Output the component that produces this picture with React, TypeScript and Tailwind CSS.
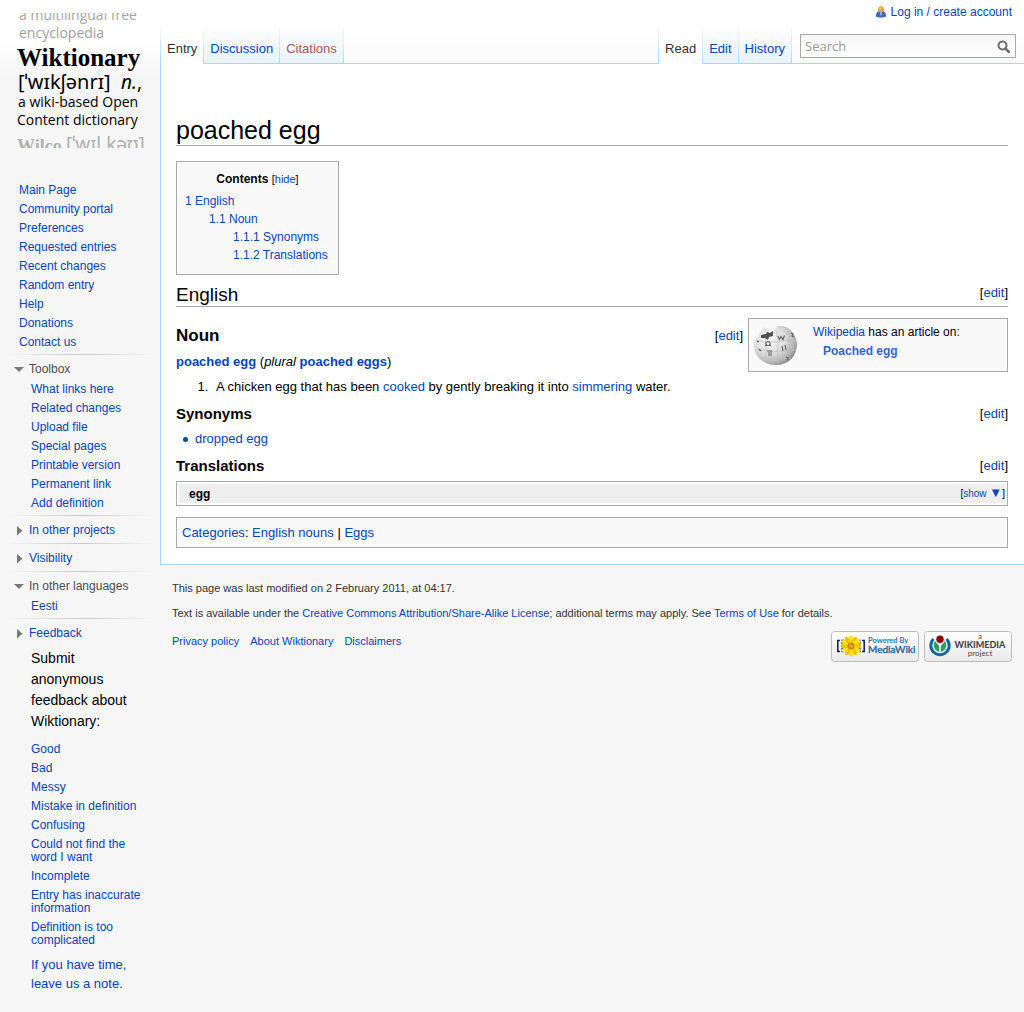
import type { ReactNode } from 'react';

function Link({ children, className = 'text-[#0645b5]' }: { children: ReactNode; className?: string }) {
  return (
    <a href="#" className={`hover:underline ${className}`}>
      {children}
    </a>
  );
}

function Logo() {
  return (
    <a href="#" aria-label="Wiktionary main page" className="mt-3 block h-[136px] w-full overflow-hidden">
      <svg viewBox="0 12 160 136" className="block h-[136px] w-[160px]">
        <defs>
          <clipPath id="logoClip">
            <rect x="0" y="13" width="160" height="135" />
          </clipPath>
        </defs>
        <g clipPath="url(#logoClip)" fontFamily="'Open Sans', 'Noto Sans', sans-serif" fontWeight="500">
          <text x="19" y="20" fontSize="14" fill="#a6a6a6">a multilingual free</text>
          <text x="19" y="38" fontSize="14" fill="#a0a0a0">encyclopedia</text>
          <text x="17" y="66" fontSize="25" fontWeight="700" fontFamily="'Liberation Serif', serif" fill="#000">Wiktionary</text>
          <text x="18" y="89" fontSize="20" fontWeight="400" fontFamily="'Noto Sans', sans-serif" fill="#000">[ˈwɪkʃənrɪ]</text>
          <text x="121" y="89" fontSize="19" fontWeight="400" fontFamily="'Noto Sans', sans-serif" fill="#000">
            <tspan fontStyle="italic">n.</tspan>,
          </text>
          <text x="18" y="107" fontSize="14" fill="#000">a wiki-based Open</text>
          <text x="17" y="125" fontSize="14" fill="#000">Content dictionary</text>
          <text x="17" y="152" fontSize="18" fontWeight="700" fontFamily="'Liberation Serif', serif" fill="#b0b0b0">Wilco</text>
          <text x="66" y="151" fontSize="19" fontWeight="400" fontFamily="'Noto Sans', sans-serif" fill="#b0b0b0">[ˈwɪl kəʊ]</text>
        </g>
      </svg>
    </a>
  );
}

function Divider() {
  return <div className="ml-2 mr-[6px] h-px bg-linear-to-r from-transparent via-[#c8c8c8] to-transparent" />;
}

function PortalTitle({ label, open = false }: { label: string; open?: boolean }) {
  return (
    <button
      type="button"
      aria-expanded={open}
      className={`flex h-[27px] w-full items-center pt-[2px] pl-[13px] text-left text-[12px] leading-[19px] ${open ? 'text-[#4d4d4d]' : 'text-[#0645b5]'}`}
    >
      <svg viewBox="0 0 12 12" className="mr-1 h-3 w-3 shrink-0" fill="#797979" aria-hidden="true">
        {open ? <path d="M1 3h10L6 8z" /> : <path d="M4 1v9.500l5.500-4.750z" />}
      </svg>
      {label}
    </button>
  );
}

function LinkList({ items, className }: { items: string[]; className: string }) {
  return (
    <ul className={`text-[12px] leading-[13px] ${className}`}>
      {items.map((item) => (
        <li key={item} className="py-[3px]">
          <Link>{item}</Link>
        </li>
      ))}
    </ul>
  );
}

const navigation = ['Main Page', 'Community portal', 'Preferences', 'Requested entries', 'Recent changes', 'Random entry', 'Help', 'Donations', 'Contact us'];
const toolbox = ['What links here', 'Related changes', 'Upload file', 'Special pages', 'Printable version', 'Permanent link', 'Add definition'];
const feedback = ['Good', 'Bad', 'Messy', 'Mistake in definition', 'Confusing', 'Could not find the word I want', 'Incomplete', 'Entry has inaccurate information', 'Definition is too complicated'];

function Sidebar() {
  return (
    <aside className="w-40 shrink-0 pb-5">
      <Logo />
      <nav aria-label="Navigation">
        <LinkList items={navigation} className="mt-[33px] mb-[2px] pl-[19px]" />
        <Divider />
        <PortalTitle label="Toolbox" open />
        <LinkList items={toolbox} className="-mt-[2px] mb-[2px] pl-[31px]" />
        <Divider />
        <PortalTitle label="In other projects" />
        <Divider />
        <PortalTitle label="Visibility" />
        <Divider />
        <PortalTitle label="In other languages" open />
        <LinkList items={['Eesti']} className="-mt-[2px] mb-[2px] pl-[31px]" />
        <Divider />
        <PortalTitle label="Feedback" />
      </nav>
      <p className="mt-[2px] w-[140px] pl-[31px] text-[14px] leading-[21px]">Submit anonymous feedback about Wiktionary:</p>
      <LinkList items={feedback} className="mt-2 pl-[31px] pr-3" />
      <p className="mt-[5px] pl-[31px] pr-4 text-[13px] leading-[19px]">
        <Link>If you have time, leave us a note.</Link>
      </p>
    </aside>
  );
}

function Tab({ label, kind = 'link' }: { label: string; kind?: 'active' | 'link' | 'missing' }) {
  const look = {
    active: 'text-[#333333] bg-linear-to-b from-white to-white',
    link: 'text-[#0645b5] bg-linear-to-b from-white to-[#e8f2f8] border-b border-[#a7d7f9]',
    missing: 'text-[#a55858] bg-linear-to-b from-white to-[#e8f2f8] border-b border-[#a7d7f9]',
  }[kind];
  return (
    <li className="flex">
      <a href="#" className={`flex h-10 items-start px-[6px] pt-4 text-[13px] leading-[18px] ${look}`}>
        {label}
      </a>
      <span className="w-px bg-linear-to-b from-white to-[#a7d7f9]" />
    </li>
  );
}

function UserIcon() {
  return (
    <svg viewBox="0 0 12 12" className="mr-1 h-3 w-3" aria-hidden="true">
      <path d="M1 10.500C.7 7.500 2 5.500 4 5h4c2 .5 3.300 2.500 3 5.500-2 1.300-8 1.300-10 0z" fill="#3d68ad" />
      <path d="M4.500 5h3L6.600 9.500H5.400z" fill="#8fb0dd" />
      <circle cx="6" cy="3.200" r="2.900" fill="#d9a02c" />
      <circle cx="5.500" cy="2.500" r="1.300" fill="#f3cd6c" />
    </svg>
  );
}

function Header() {
  return (
    <header className="flex h-16 flex-col bg-linear-to-b from-white from-40% to-[#fafafa]">
      <div className="flex h-6 items-center justify-end pr-3 text-[12px] leading-4">
        <UserIcon />
        <Link>Log in / create account</Link>
      </div>
      <div className="flex h-10">
        <span className="w-px shrink-0 bg-linear-to-b from-white to-[#a7d7f9]" />
        <ul className="flex">
          <Tab label="Entry" kind="active" />
          <Tab label="Discussion" />
          <Tab label="Citations" kind="missing" />
        </ul>
        <div className="flex-1 border-b border-[#a7d7f9]" />
        <span className="w-px bg-linear-to-b from-white to-[#a7d7f9]" />
        <ul className="flex">
          <Tab label="Read" kind="active" />
          <Tab label="Edit" />
          <Tab label="History" />
        </ul>
        <form className="border-b border-[#a7d7f9] pt-[10px] pr-2 pl-2">
          <div className="flex h-6 w-[216px] items-center border border-[#aaaaaa] bg-linear-to-b from-[#f6f6f6] to-white">
            <input
              type="text"
              aria-label="Search"
              placeholder="Search"
              className="h-full min-w-0 flex-1 bg-transparent pl-1 font-['Open_Sans',sans-serif] text-[13px] placeholder:text-[#999999] outline-none"
            />
            <button type="button" aria-label="Go" className="px-[5px]">
              <svg viewBox="0 0 13 13" className="h-[13px] w-[13px]" fill="none" stroke="#6c6c6c">
                <circle cx="5.500" cy="5.500" r="4" strokeWidth="2" />
                <path d="M8.500 8.500l3.300 3.300" strokeWidth="2.600" strokeLinecap="round" />
              </svg>
            </button>
          </div>
        </form>
      </div>
    </header>
  );
}

function EditLink() {
  return (
    <span className="text-[13px] leading-5 font-normal">
      [<Link>edit</Link>]
    </span>
  );
}

function WikipediaGlobe() {
  return (
    <svg viewBox="0 0 44 44" className="h-11 w-11 shrink-0" aria-hidden="true">
      <defs>
        <radialGradient id="globe" cx="0.35" cy="0.35" r="0.7">
          <stop offset="0" stopColor="#fbfbfb" />
          <stop offset="0.55" stopColor="#dadada" />
          <stop offset="0.85" stopColor="#b4b4b4" />
          <stop offset="1" stopColor="#8c8c8c" />
        </radialGradient>
      </defs>
      <path d="M5 11c1-3 3-5 6-7 0 2 2 2 3 1 1 2 2 4 4 3s2-1 4-3-1-1 1-2c7-.5 12 1 16 7 3 4 4 8 4 13-1 11-9 19-21 19C10 42 0 34 0 22 0 18 3 15 5 11z" fill="url(#globe)" />
      <g fill="none" stroke="#bdbdbd" strokeWidth="0.700">
        <path d="M2 18c5-1 7 2 12 1s8 1 13-1 10 1 16-1M2 27c6 1 9-1 14 1s9-1 14 0 8-1 12-1M6 35c5 0 8 2 13 1s10 1 18-1" />
        <path d="M12 14c-2 6 1 8 0 14s2 9 4 13M23 8c-1 6 2 9 1 15s-1 11 0 18M34 7c0 6 2 9 1 15s-1 11-4 16" />
      </g>
      <path d="M7 12l5-1 1-2 3 1 3-2v5l-4 1-1 3-3-2-4 0z" fill="#505050" />
      <g fill="none" stroke="#5c5c5c" strokeWidth="1.100">
        <path d="M24 13l1.500 3.500 1.500-3 2 3 1.500-4M11 22.500h2c-2-2-1-4 1-4s3 2 1 4h2M28 23l1 5M31 22l1 5M13 28h5M14 30h4M14 32h4M37 10l2 1-1 2 2 1M32 34l2 1-1 2M3 18l2 1M5 26l2 2" />
      </g>
    </svg>
  );
}

function Contents() {
  return (
    <nav aria-label="Contents" className="mt-[15px] h-[114px] w-fit min-w-[163px] border border-[#aaaaaa] bg-[#f9f9f9] px-2 pt-2 text-[12px]">
      <div className="text-center leading-[18px]">
        <h2 className="inline font-bold">Contents</h2>{' '}
        <span className="text-[11px]">
          [<button type="button" className="text-[#0645b5]">hide</button>]
        </span>
      </div>
      <ul className="mt-1 leading-[18px]">
        <li><Link>1 English</Link></li>
        <li className="pl-6"><Link>1.1 Noun</Link></li>
        <li className="pl-12"><Link>1.1.1 Synonyms</Link></li>
        <li className="pl-12"><Link>1.1.2 Translations</Link></li>
      </ul>
    </nav>
  );
}

function Article() {
  return (
    <main className="border-b border-l border-[#a7d7f9] bg-white pt-[52px] pr-4 pb-4 pl-[15px] text-[13px] leading-5">
      <h1 className="border-b border-[#aaaaaa] text-[25px] leading-[29px]">poached egg</h1>
      <Contents />
      <h2 className="mt-2 flex items-start justify-between border-b border-[#aaaaaa] text-[19px] leading-[23px]">
        English <EditLink />
      </h2>
      <div className="flex pt-[11px]">
        <div className="flex-1">
          <h3 className="mt-[6px] flex items-center justify-between text-[17px] leading-6 font-bold">
            Noun <EditLink />
          </h3>
          <p className="mt-1">
            <Link className="font-bold text-[#0645b5]">poached egg</Link> (<i>plural</i> <Link className="font-bold text-[#0645b5]">poached eggs</Link>)
          </p>
        </div>
        <aside className="ml-[5px] flex h-[54px] w-[260px] gap-[15px] border border-[#aaaaaa] bg-[#f9f9f9] pt-1 pl-[5px] text-[12px] leading-[19px]">
          <WikipediaGlobe />
          <div>
            <p><Link>Wikipedia</Link> has an article on:</p>
            <p className="pl-[10px] font-bold"><Link className="text-[#3366cc]">Poached egg</Link></p>
          </div>
        </aside>
      </div>
      <ol className="mt-[5px] list-decimal pl-9">
        <li className="pl-1">A chicken egg that has been <Link>cooked</Link> by gently breaking it into <Link>simmering</Link> water.</li>
      </ol>
      <h4 className="mt-[7px] flex items-center justify-between text-[15px] leading-5 font-bold">
        Synonyms <EditLink />
      </h4>
      <ul className="mt-[5px]">
        <li className="flex items-center gap-[7px] pl-[7px]">
          <span className="h-[5px] w-[5px] rounded-full bg-[#00528c]" />
          <Link>dropped egg</Link>
        </li>
      </ul>
      <h4 className="mt-[7px] flex items-center justify-between text-[15px] leading-5 font-bold">
        Translations <EditLink />
      </h4>
      <section className="mt-[5px] border border-[#aaaaaa] p-[2px]">
        <div className="flex h-[19px] items-center justify-between bg-[#eeeeee] pl-[10px] text-[12px] leading-[18px]">
          <b>egg</b>
          <span className="text-[10px]">
            [<button type="button" className="text-[#0645b5]">show <span className="text-[13px] leading-none">▼</span></button>]
          </span>
        </div>
      </section>
      <div className="mt-[11px] border border-[#aaaaaa] bg-[#f9f9f9] px-[5px] py-[5px] leading-[19px]">
        <Link>Categories</Link>: <Link>English nouns</Link> | <Link>Eggs</Link>
      </div>
    </main>
  );
}

const petals = [0, 30, 60, 90, 120, 150, 180, 210, 240, 270, 300, 330];

function MediaWikiBadge() {
  return (
    <a href="#" aria-label="Powered by MediaWiki">
      <svg viewBox="0 0 88 31" className="block h-[31px] w-[88px]">
        <defs>
          <linearGradient id="badge" x1="0" y1="0" x2="0" y2="1">
            <stop offset="0" stopColor="#ffffff" />
            <stop offset="1" stopColor="#e9e9e9" />
          </linearGradient>
        </defs>
        <rect x="0.500" y="0.500" width="87" height="30" rx="3" fill="url(#badge)" stroke="#bcbcbc" />
        <g fill="none" stroke="#14256e" strokeWidth="1.600">
          <path d="M9 9.500H6.800v11H9M31 9.500h2.200v11H31" />
          <path d="M13 9.500h-1.800v11H13M27 9.500h1.800v11H27" strokeDasharray="2 1" />
        </g>
        <g transform="translate(20 15)">
          {petals.map((a) => (
            <ellipse key={a} cx="0" cy="-6.500" rx="2.200" ry="4" fill={a % 60 ? '#efc400' : '#ffe21c'} transform={`rotate(${a})`} />
          ))}
          <circle r="3.600" fill="#c98a10" />
          <circle r="1.800" fill="#e9a71d" />
        </g>
        <text x="37" y="12" fontSize="7.500" fontFamily="Lato, sans-serif" fontWeight="700" fill="#2a78a8">Powered By</text>
        <text x="37" y="22" fontSize="10" fontFamily="Lato, sans-serif" fontWeight="500" fill="#1a6496" stroke="#1a6496" strokeWidth="0.300">MediaWiki</text>
      </svg>
    </a>
  );
}

function WikimediaBadge() {
  return (
    <a href="#" aria-label="A Wikimedia project">
      <svg viewBox="0 0 88 31" className="block h-[31px] w-[88px]">
        <rect x="0.500" y="0.500" width="87" height="30" rx="3" fill="url(#badge)" stroke="#bcbcbc" />
        <path d="M9.500 8a9.200 9.200 0 1 0 13 0" fill="none" stroke="#14689b" strokeWidth="3" />
        <path d="M11 10c-2.500 4-1 9.500 4.200 11V15z" fill="#339966" />
        <path d="M21 10c2.500 4 1 9.500-4.200 11V15z" fill="#339966" />
        <circle cx="16" cy="8.200" r="3.700" fill="#990000" />
        <g fontFamily="Lato, sans-serif" textAnchor="middle" fill="#484848">
          <text x="56" y="8" fontSize="8">a</text>
          <text x="56" y="17" fontSize="9" fontWeight="900">WIKIMEDIA</text>
          <text x="56" y="25" fontSize="8">project</text>
        </g>
      </svg>
    </a>
  );
}

function Footer() {
  return (
    <footer className="pt-[15px] pr-3 pb-8 pl-3 text-[11px] leading-4 text-[#333333]">
      <p>This page was last modified on 2 February 2011, at 04:17.</p>
      <p className="mt-[9px]">
        Text is available under the <Link>Creative Commons Attribution/Share-Alike License</Link>; additional terms may apply. See <Link>Terms of Use</Link> for details.
      </p>
      <div className="mt-[10px] flex items-start justify-between">
        <ul className="mt-[2px] flex gap-[11px]">
          <li><Link>Privacy policy</Link></li>
          <li><Link>About Wiktionary</Link></li>
          <li><Link>Disclaimers</Link></li>
        </ul>
        <div className="flex gap-[5px]">
          <MediaWikiBadge />
          <WikimediaBadge />
        </div>
      </div>
    </footer>
  );
}

export default function App() {
  return (
    <div className="min-h-screen bg-[#f6f6f6] font-['Liberation_Sans',Arial,sans-serif] text-black">
      <div className="flex bg-[linear-gradient(to_bottom,#ffffff_40px,#f6f6f6_80px)]">
        <Sidebar />
        <div className="min-w-0 flex-1">
          <Header />
          <Article />
          <Footer />
        </div>
      </div>
    </div>
  );
}
